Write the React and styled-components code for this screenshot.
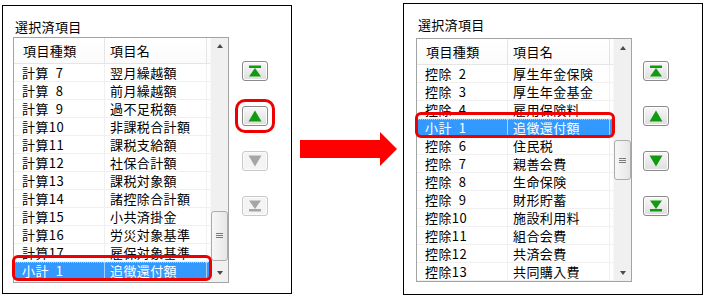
import React from 'react';
import styled, { createGlobalStyle } from 'styled-components';

const ROW_H = 18;
const HEAD_H = 26;

const leftRows = [
  ['計算\u20027', '翌月繰越額'],
  ['計算\u20028', '前月繰越額'],
  ['計算\u20029', '過不足税額'],
  ['計算10', '非課税合計額'],
  ['計算11', '課税支給額'],
  ['計算12', '社保合計額'],
  ['計算13', '課税対象額'],
  ['計算14', '諸控除合計額'],
  ['計算15', '小共済掛金'],
  ['計算16', '労災対象基準'],
  ['計算17', '雇保対象基準'],
  ['小計\u20021', '追徴還付額'],
];

const rightRows = [
  ['控除\u20022', '厚生年金保険'],
  ['控除\u20023', '厚生年金基金'],
  ['控除\u20024', '雇用保険料'],
  ['小計\u20021', '追徴還付額'],
  ['控除\u20026', '住民税'],
  ['控除\u20027', '親善会費'],
  ['控除\u20028', '生命保険'],
  ['控除\u20029', '財形貯蓄'],
  ['控除10', '施設利用料'],
  ['控除11', '組合会費'],
  ['控除12', '共済会費'],
  ['控除13', '共同購入費'],
];

const GlobalStyle = createGlobalStyle`
  html, body {
    margin: 0;
    padding: 0;
    background: #fff;
  }
  body {
    width: 706px;
    height: 298px;
    overflow: hidden;
    font-family: "Noto Sans CJK JP", "Noto Sans", sans-serif;
    font-size: 13px;
    color: #000;
  }
`;

const Page = styled.div`
  display: flex;
  align-items: center;
  height: 298px;
  padding-left: 2px;
  box-sizing: border-box;
`;

const Panel = styled.div`
  box-sizing: border-box;
  width: ${(p) => p.$w}px;
  height: ${(p) => p.$h}px;
  border: 1px solid #000;
  padding: 13px 0 0 ${(p) => p.$pad}px;
  background: #fff;
`;

const Title = styled.div`
  line-height: 16px;
  margin-left: 2px;
  letter-spacing: 0.3px;
`;

const Body = styled.div`
  display: flex;
  align-items: flex-start;
  margin-top: ${(p) => p.$top}px;
`;

const ListBox = styled.div`
  position: relative;
  box-sizing: border-box;
  width: 216px;
  height: ${(p) => p.$h}px;
  border: 1px solid #a3a3a3;
  display: flex;
  background: #fff;
`;

const Grid = styled.div`
  flex: 1;
  display: flex;
  flex-direction: column;
  overflow: hidden;
`;

const Header = styled.div`
  display: flex;
  flex: none;
  height: ${HEAD_H}px;
  box-sizing: border-box;
  border-bottom: 1px solid #e5e5e5;
  background: linear-gradient(#ffffff, #fbfbfc);
`;

const HeadCell = styled.div`
  box-sizing: border-box;
  width: ${(p) => p.$w}px;
  padding-left: ${(p) => p.$pl}px;
  border-right: 1px solid #e5e5e5;
  line-height: 25px;
  letter-spacing: 0.4px;
`;

const Row = styled.div`
  display: flex;
  flex: none;
  height: ${ROW_H}px;
  box-sizing: border-box;
  border-bottom: 1px solid #f0f0f0;
  background: ${(p) => (p.$sel ? '#3399ff' : 'transparent')};
  color: ${(p) => (p.$sel ? '#fff' : '#000')};
  outline: ${(p) => (p.$sel ? '1px dotted #f2c46a' : 'none')};
  outline-offset: -1px;
`;

const Cell = styled.div`
  box-sizing: border-box;
  width: ${(p) => p.$w}px;
  padding-left: ${(p) => p.$pl}px;
  border-right: 1px solid ${(p) => (p.$sel ? 'rgba(255,255,255,0.55)' : '#f0f0f0')};
  line-height: 17px;
  white-space: nowrap;
  letter-spacing: 0.4px;
`;

const ScrollBar = styled.div`
  flex: none;
  width: 18px;
  display: flex;
  flex-direction: column;
  background: #f0f0f0;
  border-left: 1px solid #f7f7f7;
  box-sizing: border-box;
`;

const ScrollBtn = styled.div`
  flex: none;
  height: 17px;
  display: flex;
  align-items: center;
  justify-content: center;
  &::before {
    content: '';
    width: 0;
    height: 0;
    border-left: 3.5px solid transparent;
    border-right: 3.5px solid transparent;
    ${(p) => (p.$down ? 'border-top' : 'border-bottom')}: 4px solid #4a4a4a;
  }
`;

const Track = styled.div`
  flex: 1;
  display: flex;
  flex-direction: column;
`;

const Thumb = styled.div`
  margin: ${(p) => p.$top}px 0 0 0;
  height: ${(p) => p.$h}px;
  box-sizing: border-box;
  border: 1px solid #acacac;
  border-radius: 3px;
  background: linear-gradient(to right, #f7f7f7, #e6e6e6);
  display: flex;
  align-items: center;
  justify-content: center;
`;

const Grip = styled.div`
  width: 7px;
  height: 5px;
  background: repeating-linear-gradient(#7a7a7a 0 1px, transparent 1px 2px);
`;

const Mark = styled.div`
  position: absolute;
  left: -2px;
  width: 200px;
  height: 26px;
  box-sizing: border-box;
  border: 3px solid #ee0000;
  border-radius: 6px;
  pointer-events: none;
`;

const Buttons = styled.div`
  display: flex;
  flex-direction: column;
  gap: 25px;
  padding-top: ${(p) => p.$top}px;
  margin-left: ${(p) => p.$gap}px;
`;

const MoveBtn = styled.button`
  width: 26px;
  height: 20px;
  padding: 0;
  display: flex;
  align-items: center;
  justify-content: center;
  border: 1px solid ${(p) => (p.disabled ? '#c9c9c9' : '#8a8a8a')};
  border-radius: 3px;
  background: ${(p) =>
    p.disabled ? '#f4f4f4' : 'linear-gradient(#f8f8f8, #dedede)'};
  box-shadow: inset 0 0 0 1px ${(p) => (p.disabled ? '#fbfbfb' : '#fdfdfd')};
  outline: ${(p) => (p.$mark ? '3px solid #ee0000' : 'none')};
  outline-offset: 4px;
`;

const ArrowZone = styled.div`
  display: flex;
  margin: 0 6px 0 8px;
`;

const Icon = ({ kind, off }) => {
  const c = off ? '#a6a6a6' : '#129a12';
  return (
    <svg width="14" height="12" viewBox="0 0 14 12">
      {kind === 'top' && (
        <>
          <rect x="1" y="0.5" width="12" height="2.5" fill={c} />
          <path d="M7 3 L13 11.5 H1 Z" fill={c} />
        </>
      )}
      {kind === 'up' && <path d="M7 0.5 L13.5 11.5 H0.5 Z" fill={c} />}
      {kind === 'down' && <path d="M0.5 0.5 H13.5 L7 11.5 Z" fill={c} />}
      {kind === 'bottom' && (
        <>
          <path d="M1 0.5 H13 L7 9 Z" fill={c} />
          <rect x="1" y="9" width="12" height="2.5" fill={c} />
        </>
      )}
    </svg>
  );
};

const ListView = ({ rows, sel, h, thumbTop, thumbH }) => (
  <ListBox $h={h}>
    <Grid>
      <Header>
        <HeadCell $w={91} $pl={9}>項目種類</HeadCell>
        <HeadCell $w={102} $pl={5}>項目名</HeadCell>
      </Header>
      {rows.map(([kind, name], i) => (
        <Row key={i} $sel={i === sel}>
          <Cell $w={91} $pl={8} $sel={i === sel}>{kind}</Cell>
          <Cell $w={102} $pl={5} $sel={i === sel}>{name}</Cell>
        </Row>
      ))}
    </Grid>
    <ScrollBar>
      <ScrollBtn />
      <Track>
        <Thumb $top={thumbTop} $h={thumbH}>
          <Grip />
        </Thumb>
      </Track>
      <ScrollBtn $down />
    </ScrollBar>
    <Mark style={{ top: HEAD_H + sel * ROW_H - 7 }} />
  </ListBox>
);

const Movers = ({ top, gap, mark, offDown }) => (
  <Buttons $top={top} $gap={gap}>
    <MoveBtn><Icon kind="top" /></MoveBtn>
    <MoveBtn $mark={mark}><Icon kind="up" /></MoveBtn>
    <MoveBtn disabled={offDown}><Icon kind="down" off={offDown} /></MoveBtn>
    <MoveBtn disabled={offDown}><Icon kind="bottom" off={offDown} /></MoveBtn>
  </Buttons>
);

export default function App() {
  return (
    <>
      <GlobalStyle />
      <Page>
        <Panel $w={290} $h={289} $pad={10}>
          <Title>選択済項目</Title>
          <Body $top={2}>
            <ListView rows={leftRows} sel={11} h={246} thumbTop={156} thumbH={50} />
            <Movers top={24} gap={13} mark offDown />
          </Body>
        </Panel>
        <ArrowZone>
          <svg width="97" height="34" viewBox="0 0 97 34">
            <path d="M0 8 H80 V0 L97 17 L80 34 V26 H0 Z" fill="#ff0000" />
          </svg>
        </ArrowZone>
        <Panel $w={300} $h={292} $pad={12}>
          <Title>選択済項目</Title>
          <Body $top={5}>
            <ListView rows={rightRows} sel={3} h={244} thumbTop={84} thumbH={40} />
            <Movers top={23} gap={11} />
          </Body>
        </Panel>
      </Page>
    </>
  );
}
